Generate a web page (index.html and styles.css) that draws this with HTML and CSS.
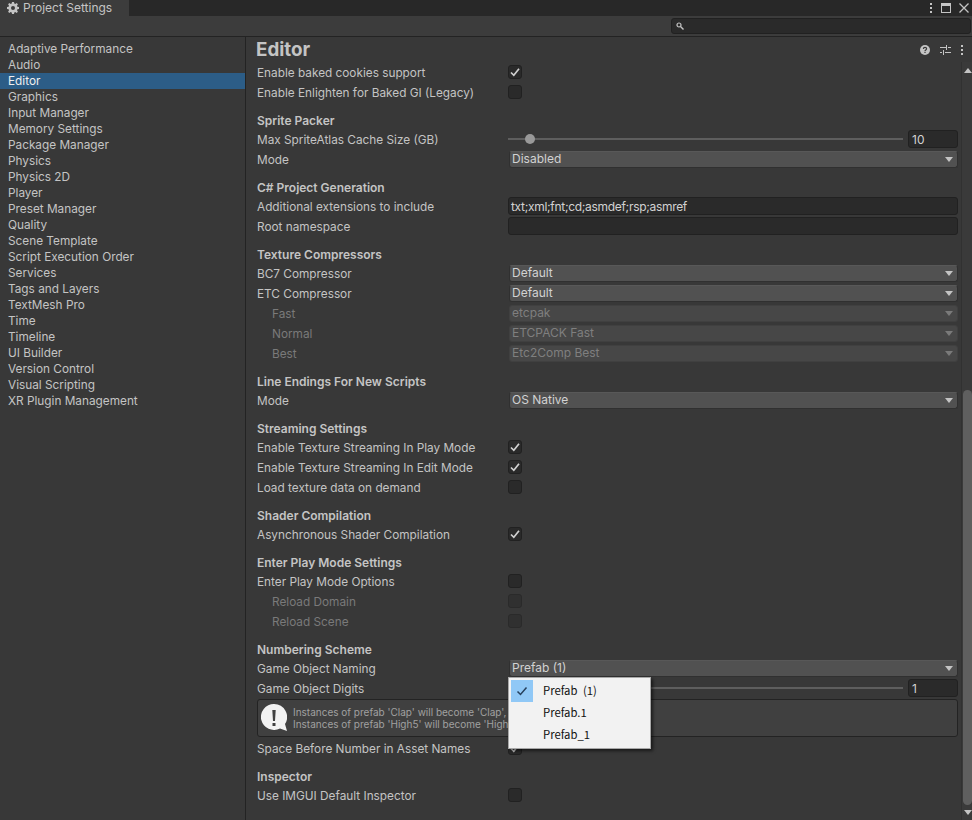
FILE: index.html
```html
<!DOCTYPE html>
<html lang="en">
<head>
<meta charset="utf-8">
<title>Project Settings</title>
<link rel="stylesheet" href="styles.css">
</head>
<body>
<div class="window">
  <header class="tabbar">
    <div class="tab">
      <svg class="gear" viewBox="0 0 12 12" width="12" height="12"><path fill="#c4c4c4" fill-rule="evenodd" d="M5 0h2l.3 1.6 1 .4L9.7 1.1l1.2 1.2-.9 1.4.4 1 1.6.3v2l-1.6.3-.4 1 .9 1.4-1.2 1.2-1.4-.9-1 .4L7 12H5l-.3-1.6-1-.4-1.4.9-1.2-1.2.9-1.4-.4-1L0 7V5l1.6-.3.4-1-.9-1.4 1.2-1.2 1.4.9 1-.4zM6 4a2 2 0 1 0 0 4 2 2 0 0 0 0-4z"/></svg>
      <span>Project Settings</span>
    </div>
    <div class="winbtns">
      <svg viewBox="0 0 4 12" width="4" height="12"><path fill="#c4c4c4" d="M1 1h2v2H1zM1 5h2v2H1zM1 9h2v2H1z"/></svg>
      <svg viewBox="0 0 10 10" width="10" height="10"><path fill="#c4c4c4" d="M0 0h10v10H0zM1 3v6h8V3z" fill-rule="evenodd"/></svg>
      <svg viewBox="0 0 10 10" width="10" height="10"><path stroke="#c4c4c4" stroke-width="1.3" fill="none" d="M.5.5l9 9M9.500.5l-9 9"/></svg>
    </div>
  </header>
  <div class="toolbar">
    <div class="search">
      <svg viewBox="0 0 8 8" width="8" height="8"><circle cx="3" cy="3" r="2" fill="none" stroke="#c4c4c4" stroke-width="1.2"/><path d="M4.500 4.500L7.500 7.500" stroke="#c4c4c4" stroke-width="1.4"/></svg>
    </div>
  </div>
  <div class="split">
    <nav class="sidebar">
      <div class="nav-item">Adaptive Performance</div>
      <div class="nav-item">Audio</div>
      <div class="nav-item selected">Editor</div>
      <div class="nav-item">Graphics</div>
      <div class="nav-item">Input Manager</div>
      <div class="nav-item">Memory Settings</div>
      <div class="nav-item">Package Manager</div>
      <div class="nav-item">Physics</div>
      <div class="nav-item">Physics 2D</div>
      <div class="nav-item">Player</div>
      <div class="nav-item">Preset Manager</div>
      <div class="nav-item">Quality</div>
      <div class="nav-item">Scene Template</div>
      <div class="nav-item">Script Execution Order</div>
      <div class="nav-item">Services</div>
      <div class="nav-item">Tags and Layers</div>
      <div class="nav-item">TextMesh Pro</div>
      <div class="nav-item">Time</div>
      <div class="nav-item">Timeline</div>
      <div class="nav-item">UI Builder</div>
      <div class="nav-item">Version Control</div>
      <div class="nav-item">Visual Scripting</div>
      <div class="nav-item">XR Plugin Management</div>
    </nav>
    <main class="main">
      <div class="title-row">
        <h1 class="title">Editor</h1>
        <div class="title-icons">
          <svg viewBox="0 0 10 10" width="10" height="10"><circle cx="5" cy="5" r="5" fill="#c4c4c4"/><path d="M3.400 3.900C3.400 2.900 4.100 2.400 5 2.400s1.600.5 1.600 1.400c0 1.100-1.600 1.100-1.600 2.200" fill="none" stroke="#383838" stroke-width="1.200"/><path d="M4.400 6.800h1.200V8H4.400z" fill="#383838"/></svg>
          <svg viewBox="0 0 11 10" width="11" height="10"><path fill="#c4c4c4" d="M0 2h6v1H0zM8 2h3v1H8zM6 0h1v5H6zM0 7h2v1H0zM5 7h6v1H5zM3 5h1v5H3z"/></svg>
          <svg viewBox="0 0 4 10" width="4" height="10"><path fill="#c4c4c4" d="M1 0h2v2H1zM1 4h2v2H1zM1 8h2v2H1z"/></svg>
        </div>
      </div>
      <div class="body">
        <div class="content">
          <section class="section">
            <div class="row"><span class="label">Enable baked cookies support</span><span class="check on"><svg viewBox="0 0 10 10" width="10" height="10"><path d="M1 5.500l2.800 2.800L9 1.800" fill="none" stroke="#d0d0d0" stroke-width="1.700"/></svg></span></div>
            <div class="row"><span class="label">Enable Enlighten for Baked GI (Legacy)</span><span class="check"></span></div>
          </section>
          <section class="section">
            <h2 class="heading">Sprite Packer</h2>
            <div class="row"><span class="label">Max SpriteAtlas Cache Size (GB)</span><div class="slider"><div class="track"><span class="thumb"></span></div><span class="field num">10</span></div></div>
            <div class="row"><span class="label">Mode</span><div class="dropdown"><span>Disabled</span><i class="arrow"></i></div></div>
          </section>
          <section class="section">
            <h2 class="heading">C# Project Generation</h2>
            <div class="row"><span class="label">Additional extensions to include</span><span class="field wide">txt;xml;fnt;cd;asmdef;rsp;asmref</span></div>
            <div class="row"><span class="label">Root namespace</span><span class="field wide"></span></div>
          </section>
          <section class="section">
            <h2 class="heading">Texture Compressors</h2>
            <div class="row"><span class="label">BC7 Compressor</span><div class="dropdown"><span>Default</span><i class="arrow"></i></div></div>
            <div class="row"><span class="label">ETC Compressor</span><div class="dropdown"><span>Default</span><i class="arrow"></i></div></div>
            <div class="row"><span class="label sub">Fast</span><div class="dropdown off"><span>etcpak</span><i class="arrow"></i></div></div>
            <div class="row"><span class="label sub">Normal</span><div class="dropdown off"><span>ETCPACK Fast</span><i class="arrow"></i></div></div>
            <div class="row"><span class="label sub">Best</span><div class="dropdown off"><span>Etc2Comp Best</span><i class="arrow"></i></div></div>
          </section>
          <section class="section">
            <h2 class="heading">Line Endings For New Scripts</h2>
            <div class="row"><span class="label">Mode</span><div class="dropdown"><span>OS Native</span><i class="arrow"></i></div></div>
          </section>
          <section class="section">
            <h2 class="heading">Streaming Settings</h2>
            <div class="row"><span class="label">Enable Texture Streaming In Play Mode</span><span class="check on"><svg viewBox="0 0 10 10" width="10" height="10"><path d="M1 5.500l2.800 2.800L9 1.800" fill="none" stroke="#d0d0d0" stroke-width="1.700"/></svg></span></div>
            <div class="row"><span class="label">Enable Texture Streaming In Edit Mode</span><span class="check on"><svg viewBox="0 0 10 10" width="10" height="10"><path d="M1 5.500l2.800 2.800L9 1.800" fill="none" stroke="#d0d0d0" stroke-width="1.700"/></svg></span></div>
            <div class="row"><span class="label">Load texture data on demand</span><span class="check"></span></div>
          </section>
          <section class="section">
            <h2 class="heading">Shader Compilation</h2>
            <div class="row"><span class="label">Asynchronous Shader Compilation</span><span class="check on"><svg viewBox="0 0 10 10" width="10" height="10"><path d="M1 5.500l2.800 2.800L9 1.800" fill="none" stroke="#d0d0d0" stroke-width="1.700"/></svg></span></div>
          </section>
          <section class="section">
            <h2 class="heading">Enter Play Mode Settings</h2>
            <div class="row"><span class="label">Enter Play Mode Options</span><span class="check"></span></div>
            <div class="row"><span class="label sub">Reload Domain</span><span class="check off"></span></div>
            <div class="row"><span class="label sub">Reload Scene</span><span class="check off"></span></div>
          </section>
          <section class="section">
            <h2 class="heading">Numbering Scheme</h2>
            <div class="row"><span class="label">Game Object Naming</span><div class="dropdown"><span>Prefab (1)</span><i class="arrow"></i></div></div>
            <div class="row"><span class="label">Game Object Digits</span><div class="slider"><div class="track"></div><span class="field num">1</span></div></div>
            <div class="helpbox">
              <svg viewBox="0 0 26 28" width="26" height="28"><path fill="#f2f2f2" d="M13 0a13 13 0 0 1 11 20l2 7-7-2.500A13 13 0 1 1 13 0z"/><path fill="#404040" d="M11.300 6h3.400l-.7 11h-2zM11.500 19h3v3h-3z"/></svg>
              <p>Instances of prefab 'Clap' will become 'Clap',<br>Instances of prefab 'High5' will become 'High</p>
            </div>
            <div class="row"><span class="label">Space Before Number in Asset Names</span><span class="check on"><svg viewBox="0 0 10 10" width="10" height="10"><path d="M1 5.500l2.800 2.800L9 1.800" fill="none" stroke="#d0d0d0" stroke-width="1.700"/></svg></span></div>
          </section>
          <section class="section">
            <h2 class="heading">Inspector</h2>
            <div class="row"><span class="label">Use IMGUI Default Inspector</span><span class="check"></span></div>
          </section>
        </div>
        <div class="scrollbar">
          <i class="sb-up"></i>
          <div class="sb-track"><div class="sb-thumb"></div></div>
          <i class="sb-down"></i>
        </div>
      </div>
    </main>
  </div>
  <div class="popup">
    <div class="popup-item"><span class="tick"><svg viewBox="0 0 12 10" width="12" height="10"><path d="M1.500 5.500l3 3L10.500 1.500" fill="none" stroke="#26405c" stroke-width="1.500"/></svg></span><span class="popup-text">Prefab (1)</span></div>
    <div class="popup-item"><span class="tick blank"></span><span class="popup-text">Prefab.1</span></div>
    <div class="popup-item"><span class="tick blank"></span><span class="popup-text">Prefab_1</span></div>
  </div>
</div>
</body>
</html>
```
FILE: styles.css
```css
* { box-sizing: border-box; }
html, body { margin: 0; padding: 0; height: 100%; overflow: hidden; background: #383838; }
body { font-family: Inter, "Liberation Sans", sans-serif; font-size: 12px; color: #c4c4c4; }
.window { position: relative; width: 972px; height: 820px; display: flex; flex-direction: column; }

.tabbar { height: 16px; flex: none; background: #282828; display: flex; justify-content: space-between; }
.tab { width: 129px; background: #3c3c3c; display: flex; align-items: center; gap: 4px; padding-left: 7px; line-height: 16px; }
.winbtns { display: flex; align-items: center; gap: 8px; padding-right: 3px; }

.toolbar { height: 21px; flex: none; background: #3c3c3c; border-bottom: 1px solid #232323; padding: 2px 1px 0 0; display: flex; justify-content: flex-end; }
.search { width: 300px; height: 16px; background: #2a2a2a; border: 1px solid #212121; border-radius: 3px; display: flex; align-items: center; padding-left: 4px; }

.split { flex: 1; display: flex; min-height: 0; }
.sidebar { width: 246px; flex: none; border-right: 1px solid #232323; padding-top: 4px; }
.nav-item { height: 16px; line-height: 16px; padding-left: 8px; font-size: 11.8px; }
.nav-item.selected { background: #2c5d87; color: #f0f0f0; }

.main { flex: 1; display: flex; flex-direction: column; min-width: 0; }
.title-row { height: 26px; flex: none; display: flex; justify-content: space-between; align-items: center; padding: 0 8px 0 10px; }
.title { margin: 0; font-size: 18.8px; font-weight: 700; line-height: 26px; color: #c4c4c4; }
.title-icons { display: flex; align-items: center; gap: 9px; padding-bottom: 1px; }
.title-icons svg:first-child { margin-right: 1px; }

.body { flex: 1; display: flex; min-height: 0; }
.content { flex: 1; padding-left: 11px; padding-right: 3px; min-width: 0; }
.section { margin-bottom: 8px; }
.heading { margin: 0; height: 19px; line-height: 19px; font-size: 12px; font-weight: 600; color: #c4c4c4; }
.row { height: 20px; display: flex; align-items: flex-start; }
.label { width: 251px; flex: none; line-height: 20px; font-size: 11.8px; }
.label.sub { padding-left: 15px; color: #7a7a7a; }

.check { width: 14px; height: 14px; margin-top: 2px; background: #2a2a2a; border: 1px solid #212121; border-radius: 3px; display: flex; align-items: center; justify-content: center; }
.check.off { background: #303030; border-color: #2a2a2a; }

.dropdown { flex: 1; height: 17px; margin: 1px 0 0 1px; background: #515151; border: 1px solid #303030; border-top-color: #585858; border-radius: 3px; display: flex; align-items: center; justify-content: space-between; padding: 0 4px 2px 2px; line-height: 15px; color: #d2d2d2; }
.dropdown.off { background: #474747; border-color: #404040; color: #7f7f7f; }
.arrow { width: 0; height: 0; margin-top: 2px; border-left: 4.500px solid transparent; border-right: 4.500px solid transparent; border-top: 5px solid #c4c4c4; }
.dropdown.off .arrow { border-top-color: #7a7a7a; }

.field { height: 18px; background: #2a2a2a; border: 1px solid #212121; border-radius: 3px; line-height: 16px; padding: 1px 0 0 2px; color: #d2d2d2; display: block; }
.field.wide { flex: 1; letter-spacing: -0.31px; }
.field.num { width: 50px; flex: none; padding-left: 3px; }
.slider { flex: 1; display: flex; align-items: center; height: 18px; gap: 5px; }
.track { flex: 1; height: 2px; background: #5e5e5e; position: relative; }
.thumb { position: absolute; left: 17px; top: -4px; width: 10px; height: 10px; border-radius: 50%; background: #999; }

.helpbox { height: 38px; margin-bottom: 2px; background: #404040; border: 1px solid #232323; border-radius: 3px; display: flex; align-items: center; gap: 6px; padding-left: 3px; }
.helpbox p { margin: 0; white-space: nowrap; font-size: 10px; line-height: 12px; color: #a0a0a0; }

.scrollbar { width: 11px; flex: none; margin-top: -1px; border-left: 1px solid #313131; background: #3a3a3a; display: flex; flex-direction: column; align-items: flex-end; }
.sb-up { margin-top: 6px; width: 0; height: 0; border-left: 4px solid transparent; border-right: 4px solid transparent; border-bottom: 5px solid #c4c4c4; }
.sb-track { flex: 1; width: 100%; padding-left: 1px; display: flex; flex-direction: column; justify-content: flex-end; padding-bottom: 5px; }
.sb-thumb { height: 415px; width: 9px; background: #5f5f5f; border-radius: 5px; }
.sb-down { margin-bottom: 5px; width: 0; height: 0; border-left: 4px solid transparent; border-right: 4px solid transparent; border-top: 5px solid #c4c4c4; }

.popup { position: absolute; left: 508px; top: 677px; width: 143px; height: 72px; background: #f2f2f2; border: 1px solid #a8a8a8; box-shadow: 2px 2px 3px rgba(0,0,0,.55); padding: 2px; font-family: "Noto Sans CJK KR", "Noto Sans", sans-serif; font-size: 11.3px; word-spacing: 3px; color: #111; }
.popup-item { height: 22px; display: flex; align-items: center; gap: 10px; line-height: 22px; }
.popup-text { padding-bottom: 2px; }
.tick { width: 22px; height: 22px; display: flex; align-items: center; justify-content: center; background: #90c8f6; }
.tick.blank { background: none; }
```
